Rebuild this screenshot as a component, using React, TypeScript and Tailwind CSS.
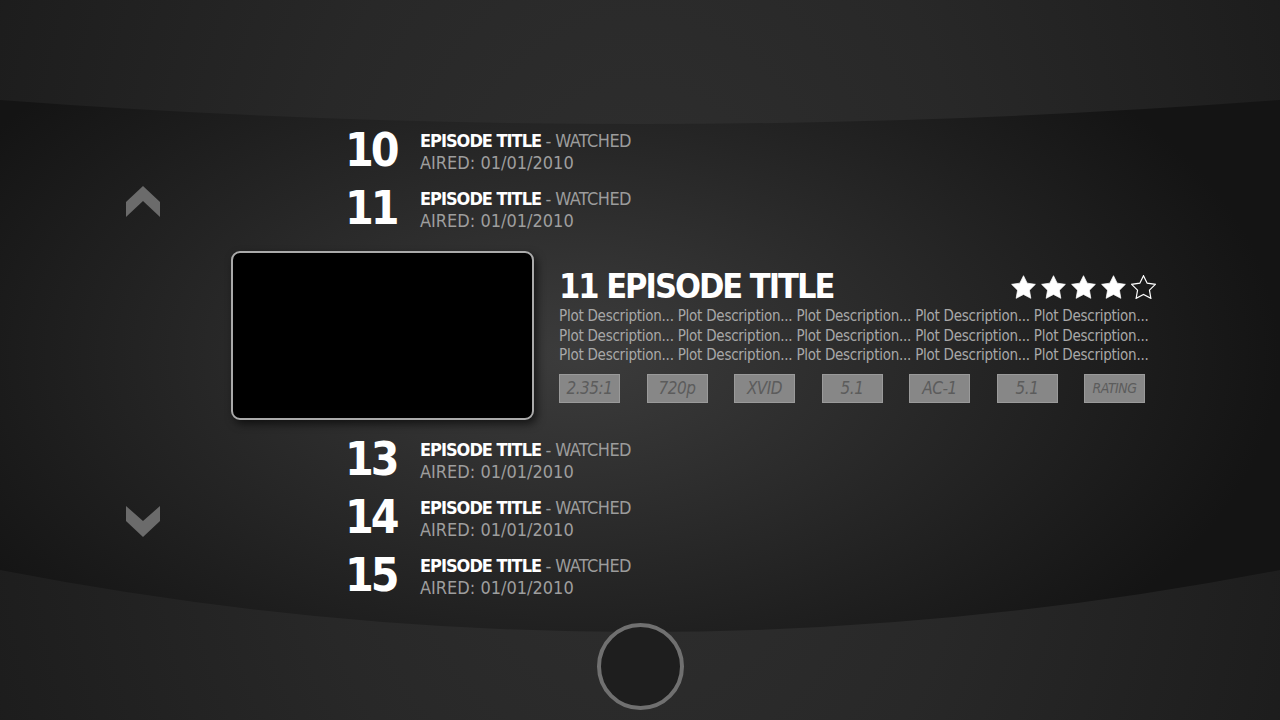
import React from 'react';

const episodesTop = [10, 11];
const episodesBottom = [13, 14, 15];
const badges = ['2.35:1', '720p', 'XVID', '5.1', 'AC-1', '5.1', 'RATING'];

function EpisodeRow({ num }: { num: number }) {
  return (
    <div className="flex h-[58px] pl-[114px]">
      <div className="mt-[1px] w-[75px] text-[46px] font-bold leading-none tracking-[-3px] text-white">{num}</div>
      <div className="mt-[4px] text-[18px] leading-[22px]">
        <div>
          <span className="font-bold tracking-[-1px] text-white">EPISODE TITLE</span>
          <span className="tracking-[-0.6px] text-[#9c9c9c]"> - WATCHED</span>
        </div>
        <div className="text-[#9e9e9e]">AIRED: 01/01/2010</div>
      </div>
    </div>
  );
}

function Star({ filled }: { filled: boolean }) {
  return (
    <svg width="25" height="24" viewBox="1.5 1.5 21 20">
      <polygon
        points="12,2 15.09,8.26 22,9.27 17,14.14 18.18,21.02 12,17.77 5.82,21.02 7,14.14 2,9.27 8.91,8.26"
        fill={filled ? '#ffffff' : 'none'}
        stroke="#ffffff"
        strokeWidth={filled ? 0.6 : 1}
      />
    </svg>
  );
}

export default function App() {
  return (
    <div className="flex h-[720px] w-[1280px] flex-col overflow-hidden bg-[radial-gradient(ellipse_55%_150%_at_50%_50%,#303030_0%,#282828_50%,#1c1c1c_100%)] font-['DejaVu_Sans_Condensed','DejaVu_Sans',sans-serif]">
      {/* curved centre band */}
      <div className="mt-[100px] flex h-[532px] shrink-0 bg-[radial-gradient(ellipse_55%_75%_at_45%_48%,#3c3c3c_0%,#2a2a2a_45%,#141414_100%)] [clip-path:path('M0_0Q640_48_1280_0L1280_470Q640_594_0_470Z')]">
        {/* scroll arrows */}
        <div className="flex w-[231px] shrink-0 flex-col pl-[126px] pt-[86px]">
          <svg width="34" height="31" viewBox="0 0 34 31">
            <polygon points="0,16 17,0 34,16 34,31 17,15 0,31" fill="#6b6b6b" />
          </svg>
          <svg className="mt-[289px]" width="34" height="31" viewBox="0 0 34 31">
            <polygon points="0,0 17,15 34,0 34,15 17,31 0,15" fill="#6b6b6b" />
          </svg>
        </div>

        <div className="flex flex-col pt-[26px]">
          {episodesTop.map((n) => (
            <EpisodeRow key={n} num={n} />
          ))}

          {/* selected episode */}
          <div className="mt-[9px] flex h-[169px]">
            <div className="h-[169px] w-[303px] shrink-0 rounded-[9px] border-2 border-[#aaaaaa] bg-black shadow-[3px_4px_8px_rgba(0,0,0,0.6)]" />
            <div className="ml-[25px] flex w-[597px] flex-col pt-[18px]">
              <div className="flex h-[34px] items-start justify-between">
                <div className="text-[34px] font-bold leading-none tracking-[-2px] text-white">11 EPISODE TITLE</div>
                <div className="mt-[6px] flex gap-[5px]">
                  <Star filled />
                  <Star filled />
                  <Star filled />
                  <Star filled />
                  <Star filled={false} />
                </div>
              </div>
              <div className="mt-[4px] text-[15px] leading-[19.5px] tracking-[-0.25px] text-[#a8a8a8]">
                {[0, 1, 2].map((i) => (
                  <div key={i} className="whitespace-nowrap">
                    Plot Description... Plot Description... Plot Description... Plot Description... Plot Description...
                  </div>
                ))}
              </div>
              <div className="mt-[8.5px] flex w-[586px] justify-between">
                {badges.map((b, i) => (
                  <div
                    key={i}
                    className={`flex h-[29px] w-[61px] items-center justify-center border border-[#9a9a9a] bg-[#878787] font-light italic tracking-[-0.5px] text-[#5c5c5c] ${
                      b === 'RATING' ? 'text-[14px]' : 'text-[17px]'
                    }`}
                  >
                    {b}
                  </div>
                ))}
              </div>
            </div>
          </div>

          <div className="mt-[15px]">
            {episodesBottom.map((n) => (
              <EpisodeRow key={n} num={n} />
            ))}
          </div>
        </div>
      </div>

      {/* home button */}
      <div className="relative mx-auto mt-[-9px] h-[87px] w-[87px] shrink-0 rounded-full border-4 border-[#707070] bg-[#1e1e1e]" />
    </div>
  );
}
